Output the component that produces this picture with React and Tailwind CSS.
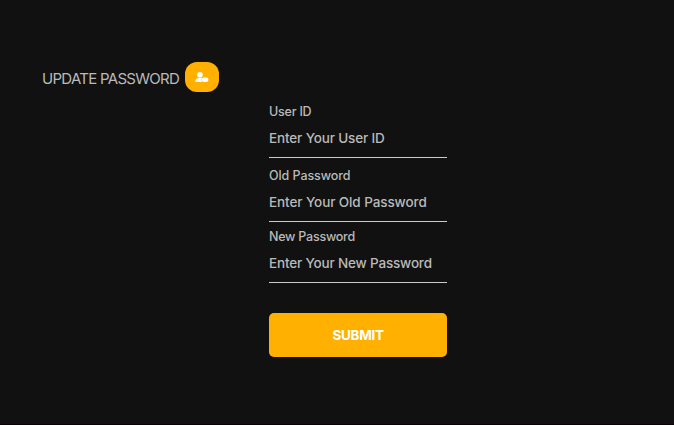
const fields = [
  { id: "user", label: "User ID", placeholder: "Enter Your User ID", type: "text", box: "h-[64px]", labelSpacing: "tracking-[-0.22px]", spacing: "tracking-[-0.14px]" },
  { id: "old", label: "Old Password", placeholder: "Enter Your Old Password", type: "password", box: "h-[61px]", labelSpacing: "tracking-[-0.07px]", spacing: "tracking-[-0.09px]" },
  { id: "new", label: "New Password", placeholder: "Enter Your New Password", type: "password", box: "h-[61px]", labelSpacing: "tracking-[-0.24px]", spacing: "tracking-[-0.17px]" },
];

function UserIcon() {
  return (
    <svg width="14" height="12" viewBox="0 0 14 12" fill="white" aria-hidden="true">
      <circle cx="5" cy="3.8" r="2.8" />
      <path d="M0.4 11V9.8C0.4 8.1 2.2 7 4.2 7H7.2C6.4 8.2 6.4 9.9 7.3 11Z" />
      <rect x="6.6" y="6.4" width="6.9" height="4.6" rx="2.3" />
      <path d="M7.2 7.1C6.3 8.2 6.3 9.8 7.2 10.8" fill="none" stroke="#ffb000" strokeWidth="0.2" />
    </svg>
  );
}

export default function App() {
  return (
    <main className="flex h-[425px] w-[674px] flex-col border-b border-[#0a0005] bg-[#111111] pt-[62px] font-['Inter','Liberation_Sans',sans-serif] text-[#bababa]">
      <header className="flex h-[30px] items-center pl-[42px]">
        <h1 className="w-[143px] whitespace-nowrap pt-[3px] text-[15px] leading-5 tracking-[-0.72px]">UPDATE PASSWORD</h1>
        <button type="button" className="flex h-[30px] w-[34px] items-center justify-center rounded-[12px] bg-[#ffb000]">
          <UserIcon />
        </button>
      </header>
      <form className="ml-[269px] mt-[11px] w-[178px]">
        {fields.map((f) => (
          <div key={f.id} className={f.box}>
            <label htmlFor={f.id} className={`block h-[18px] whitespace-nowrap text-[12.5px] font-medium leading-[18px] ${f.labelSpacing}`}>
              {f.label}
            </label>
            <input
              id={f.id}
              type={f.type}
              placeholder={f.placeholder}
              className={`block h-[37px] w-full border-b border-[#cccccc] bg-transparent p-0 pb-[3px] text-[13.5px] font-medium outline-none placeholder:text-[#bababa] ${f.spacing}`}
            />
          </div>
        ))}
        <button type="button" className="mt-[24px] block h-[44px] w-full rounded-[5px] bg-[#ffb000] text-[13.5px] font-bold tracking-[-0.3px] text-white">
          SUBMIT
        </button>
      </form>
    </main>
  );
}
